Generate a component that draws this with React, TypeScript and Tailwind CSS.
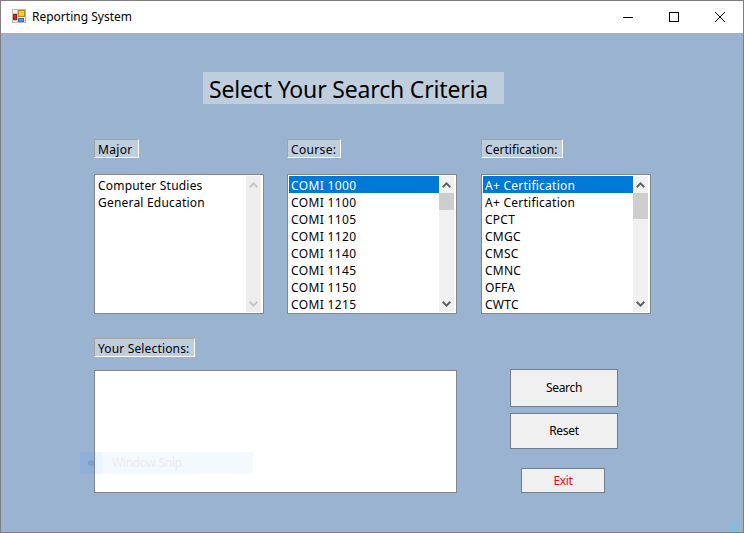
import { ReactNode } from 'react';

const courses = ['COMI 1000', 'COMI 1100', 'COMI 1105', 'COMI 1120', 'COMI 1140', 'COMI 1145', 'COMI 1150', 'COMI 1215'];
const certs = ['A+ Certification', 'A+ Certification', 'CPCT', 'CMGC', 'CMSC', 'CMNC', 'OFFA', 'CWTC'];
const majors = ['Computer Studies', 'General Education'];

function AppIcon() {
    return (
        <svg width="16" height="16" viewBox="0 0 16 16" className="shrink-0">
            <rect x="0.5" y="0.5" width="13" height="13" fill="#f2f2f2" stroke="#b8b8b8" />
            <path d="M5.5 1v12M1 4.5h12M1 11.5h12" stroke="#cacaca" />
            <rect x="6.5" y="1.5" width="6" height="6" fill="#f6c935" stroke="#b58a1c" />
            <rect x="1.5" y="5.5" width="3" height="5" fill="#d22a20" stroke="#8e1f18" />
            <rect x="6.5" y="9.5" width="5" height="3" fill="#5b93dc" stroke="#3e6eb0" />
        </svg>
    );
}

function Chevron({ down, color }: { down?: boolean; color: string }) {
    return (
        <svg width="9" height="6" viewBox="0 0 9 6">
            <path d={down ? 'M0.7 0.8 L4.5 4.6 L8.3 0.8' : 'M0.7 5.2 L4.5 1.4 L8.3 5.2'} fill="none" stroke={color} strokeWidth="2" />
        </svg>
    );
}

function Label({ className, children }: { className: string; children: ReactNode }) {
    return (
        <div className={`h-[19px] flex items-center pt-[2px] pl-[3px] bg-[#bfcedd] border-t border-l border-t-[#a3a3a3] border-l-[#a3a3a3] border-b border-r border-b-white border-r-white text-[12px] text-black whitespace-nowrap ${className}`}>
            {children}
        </div>
    );
}

function ListBox({ items, selected, thumb, tracking }: { items: string[]; selected?: number; thumb?: string; tracking: string }) {
    return (
        <div className="h-[140px] w-[170px] bg-white border border-[#828790] pl-[1px] pr-[2px] py-[1px] flex overflow-hidden">
            <div className="flex-1 min-w-0">
                {items.map((item, i) => (
                    <div
                        key={i}
                        className={`h-[17px] leading-[19px] pl-[2px] text-[12px] whitespace-nowrap ${tracking} ${i === selected ? 'bg-[#0078d7] text-white' : 'text-black'}`}
                    >
                        {item}
                    </div>
                ))}
            </div>
            <div className={`w-[15px] flex flex-col shrink-0 ${thumb ? 'bg-[#f0f0f0]' : 'bg-[#eeeeee]'}`}>
                <div className="h-[17px] flex items-center justify-center shrink-0">
                    <Chevron color={thumb ? '#606060' : '#c6c6c6'} />
                </div>
                <div className="flex-1">
                    {thumb && <div className={`${thumb} bg-[#cdcdcd]`} />}
                </div>
                <div className="h-[17px] flex items-center justify-center shrink-0">
                    <Chevron down color={thumb ? '#606060' : '#c6c6c6'} />
                </div>
            </div>
        </div>
    );
}

function Button({ className, children }: { className: string; children: ReactNode }) {
    return (
        <div className={`flex items-center justify-center bg-[#f0f0f0] border border-[#707f90] text-[12px] tracking-[-0.3px] ${className}`}>
            {children}
        </div>
    );
}

export default function App() {
    return (
        <div className="relative w-[744px] h-[533px] overflow-hidden flex flex-col border border-[#7f7f7f] bg-[#9ab3d1] font-['Noto_Sans',sans-serif]">
            <div className="h-[32px] shrink-0 bg-white flex items-center">
                <div className="ml-[11px] flex items-center">
                    <AppIcon />
                    <span className="ml-[4px] text-[12px] text-black">Reporting System</span>
                </div>
                <div className="ml-auto flex items-center h-full">
                    <div className="w-[46px] flex justify-center">
                        <div className="w-[10px] h-[1px] bg-black" />
                    </div>
                    <div className="w-[46px] flex justify-center">
                        <div className="w-[10px] h-[10px] border border-black" />
                    </div>
                    <div className="w-[46px] flex justify-center">
                        <svg width="10" height="10" viewBox="0 0 10 10">
                            <path d="M0 0 L10 10 M10 0 L0 10" stroke="#000" strokeWidth="1" />
                        </svg>
                    </div>
                </div>
            </div>

            <div className="flex-1 pl-[93px]">
                <div className="mt-[39px] ml-[109px] w-[301px] h-[32px] bg-[#bfcedd] flex items-center pt-[2px] pl-[6px] text-[23px] tracking-[-0.17px] whitespace-nowrap text-black">
                    Select Your Search Criteria
                </div>

                <div className="mt-[35px] flex">
                    <div className="w-[193px]">
                        <Label className="w-[45px] tracking-[0.35px]">Major</Label>
                        <div className="mt-[16px]">
                            <ListBox items={majors} tracking="tracking-[0.2px]" />
                        </div>
                    </div>
                    <div className="w-[194px]">
                        <Label className="w-[54px] tracking-[0.35px]">Course:</Label>
                        <div className="mt-[16px]">
                            <ListBox items={courses} selected={0} thumb="h-[17px]" tracking="tracking-[0.35px]" />
                        </div>
                    </div>
                    <div>
                        <Label className="w-[82px] tracking-[0.05px]">Certification:</Label>
                        <div className="mt-[16px]">
                            <ListBox items={certs} selected={0} thumb="h-[26px]" tracking="tracking-[0.25px]" />
                        </div>
                    </div>
                </div>

                <div className="mt-[24px] flex">
                    <div className="w-[363px]">
                        <Label className="w-[101px] tracking-[0.15px]">Your Selections:</Label>
                        <div className="mt-[13px] h-[123px] bg-white border border-[#828790]" />
                    </div>
                    <div className="ml-[53px] w-[108px] pt-[31px] flex flex-col">
                        <Button className="h-[38px] text-black">Search</Button>
                        <Button className="mt-[6px] h-[36px] text-black">Reset</Button>
                        <Button className="mt-[19px] ml-[11px] w-[84px] h-[25px] text-[#ff0022]">Exit</Button>
                    </div>
                </div>
            </div>

            <div className="absolute left-[79px] top-[451px] w-[173px] h-[22px] flex items-center">
                <div className="w-[22px] h-full shrink-0 bg-[#2f8cff]/10 flex items-center justify-center">
                    <div className="w-[6px] h-[6px] rounded-full bg-[#7f9dc8]" />
                </div>
                <div className="flex-1 h-full flex items-center pl-[10px] bg-[#e8f4ff]/50 text-[12px] tracking-[-0.3px] text-[#eeeaf2]">
                    Window Snip
                </div>
            </div>
            <div className="absolute right-[1px] bottom-[1px] w-[10px] h-[10px] border border-[#6ec6ee]" />
        </div>
    );
}
